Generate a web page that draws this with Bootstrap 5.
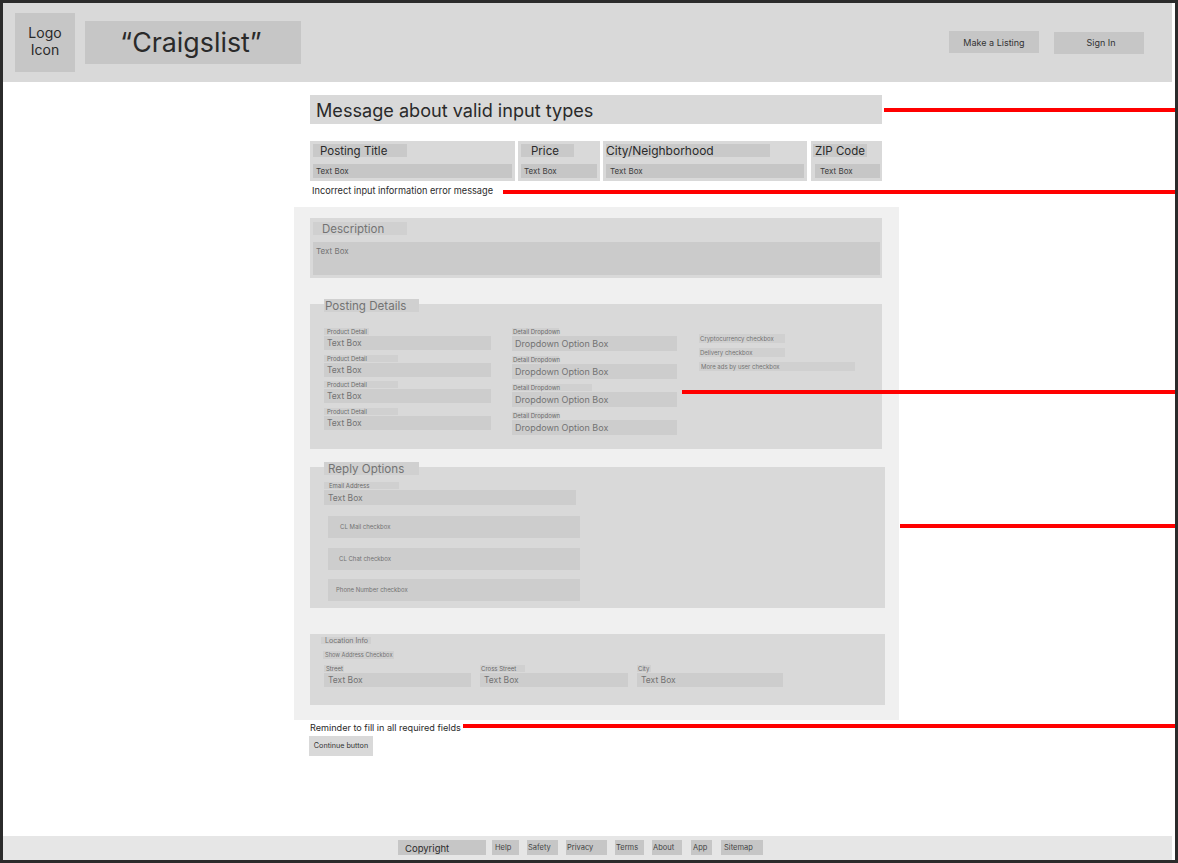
<!DOCTYPE html>
<html lang="en">
<head>
    <meta charset="UTF-8">
    <meta name="viewport" content="width=device-width, initial-scale=1">
    <title>Craigslist listing wireframe</title>

    <!-- Bootstrap CSS -->
    <link href="https://cdn.jsdelivr.net/npm/bootstrap@5.3.0/dist/css/bootstrap.min.css" rel="stylesheet">

    <style>
        body { background: #2b2b2b; font-family: Inter, "Liberation Sans", sans-serif; color: #2a2a2a; }
        .frame { margin: 3px 3px 3px 3px; height: 857px; background: #fff; }

        /* header */
        .top-bar { width: 1169px; height: 79px; background: #d9d9d9; padding-left: 12px; padding-right: 28px; }
        .logo-box { width: 60px; height: 59px; padding-bottom: 2px; background: #c6c6c6; font-size: 14px; line-height: 17px; margin-top: -1px; }
        .brand-box { width: 216px; height: 43px; margin-left: 10px; padding-right: 4px; background: #c6c6c6; font-size: 26.8px; }
        .top-btn { width: 90px; height: 22px; padding: 1px 0 0; border: 0; border-radius: 0; background: #c6c6c6; font-size: 9px; color: #333; }
        .top-btn + .top-btn { margin-left: 15px; margin-top: 1px; padding: 0 0 0 4px; }

        /* main column */
        .main-col { margin-left: 307px; width: 572px; }
        .valid-msg { height: 29px; margin-top: 13px; padding-left: 6px; padding-top: 2px; background: #d9d9d9; font-size: 18.1px; }
        .field-row { margin-top: 17px; }
        .field { height: 40px; padding: 3px; background: #d9d9d9; }
        .f-title { width: 205px; }
        .f-price { width: 82px; margin-left: 3px; }
        .f-city { width: 204px; margin-left: 3px; }
        .f-zip { width: 71px; margin-left: 4px; padding-left: 3px; padding-right: 2px; }
        .field-label { height: 13px; background: #c9c9c9; font-size: 11.5px; line-height: 15px; }
        .l-title { width: 94px; padding-left: 7px; }
        .l-price { width: 53px; padding-left: 10px; }
        .l-city { width: 164px; font-size: 12px; line-height: 13px; }
        .l-zip { width: 54px; margin-left: -1px; padding-left: 2px; }
        .field-text { height: 14px; margin-top: 7px; padding-left: 3px; background: #c6c6c6; font-size: 8px; line-height: 14px; color: #3c3c3c; }
        .f-city .field-text { padding-left: 4px; line-height: 15px; }
        .f-zip .field-text { margin-left: 1px; padding-left: 5px; line-height: 15px; }
        .error-msg { height: 26px; padding-left: 2px; font-size: 9.2px; line-height: 20px; }

        /* grey form area */
        .form-area { width: 605px; height: 513px; margin-left: -16px; padding: 11px 0 0 16px; background: #f0f0f0; color: #737373; }
        .desc-panel { width: 572px; height: 60px; padding: 4px 2px 3px 3px; background: #d9d9d9; }
        .desc-label { width: 94px; height: 13px; padding-left: 9px; background: #d0d0d0; font-size: 11.5px; line-height: 15px; }
        .desc-text { height: 33px; margin-top: 7px; padding: 3px; background: #cbcbcb; font-size: 8px; line-height: 12px; }

        .inner-panel { background: #d9d9d9; }
        .details-panel { width: 572px; height: 145px; margin-top: 26px; }
        .reply-panel { width: 575px; height: 141px; margin-top: 18px; }
        .location-panel { width: 575px; height: 71px; margin-top: 26px; padding: 3px 0 0 11px; }
        .panel-head { display: block; width: 95px; height: 13px; margin-left: 14px; background: #d0d0d0; font-size: 11.6px; line-height: 15px; position: relative; top: -5px; }
        .details-panel .panel-head { padding-left: 1px; }
        .reply-panel .panel-head { padding-left: 4px; }

        .details-cols { margin: 11px 0 0 14px; }
        .col-a { width: 167px; }
        .col-b { width: 165px; margin-left: 21px; }
        .col-c { margin-left: 22px; padding-top: 6px; }
        .tiny-label { height: 7px; margin-bottom: 1px; padding-left: 3px; background: #d0d0d0; font-size: 6px; line-height: 7px; color: #6a6a6a; white-space: nowrap; }
        .w-45 { width: 45px; }
        .w-47 { width: 47px; padding-left: 1px; }
        .w-74 { width: 74px; }
        .w-80 { width: 80px; padding-left: 1px; }
        .t-box { height: 14px; margin-bottom: 4.67px; padding-left: 3px; background: #cdcdcd; font-size: 8.5px; line-height: 14px; }
        .d-box { height: 15px; margin-bottom: 5px; padding-left: 3px; background: #cdcdcd; font-size: 9px; line-height: 15px; }
        .chk-item { width: 86px; height: 9px; margin-bottom: 5px; padding-left: 1px; background: #d0d0d0; font-size: 6px; line-height: 9px; white-space: nowrap; }
        .chk-item.chk-wide { width: 156px; padding-left: 2px; }

        .reply-body { margin: 2px 0 0 14px; }
        .email-label { width: 75px; padding-left: 5px; }
        .email-box { width: 252px; height: 15px; margin-bottom: 0; padding-left: 4px; line-height: 16px; }
        .reply-chk { width: 252px; height: 22px; margin-left: 4px; padding-bottom: 2px; background: #cdcdcd; font-size: 6px; }
        .chk-mail { margin-top: 11px; padding-left: 12px; }
        .chk-chat { margin-top: 10px; padding-left: 11px; }
        .chk-phone { margin-top: 9px; padding-left: 8px; }

        .loc-title { width: 50px; height: 7px; padding-left: 4px; background: #d0d0d0; font-size: 7px; line-height: 7px; }
        .loc-show { width: 71px; height: 8px; margin: 7px 0 0 2px; padding-left: 2px; background: #d0d0d0; font-size: 5.7px; line-height: 8px; white-space: nowrap; }
        .loc-cols { margin: 6px 0 0 3px; }
        .loc-a { width: 147px; }
        .loc-b { width: 148px; margin-left: 9px; }
        .loc-c { width: 146px; margin-left: 9px; }
        .loc-l1 { width: 20px; padding-left: 2px; }
        .loc-l2 { width: 45px; padding-left: 1px; }
        .loc-l3 { width: 14px; padding-left: 1px; }
        .loc-box { margin-bottom: 0; padding-left: 4px; }

        .reminder { height: 16px; font-size: 9.1px; line-height: 15px; color: #2a2a2a; }
        .continue-btn { width: 64px; height: 20px; margin-left: -1px; padding: 1px 0 0; border: 0; border-radius: 0; background: #d9d9d9; font-size: 7.2px; color: #333; }

        /* footer */
        .bottom-bar { width: 1169px; height: 24px; margin-top: auto; padding: 4px 0 0 395px; background: #e6e6e6; }
        .foot-item { height: 15px; margin-right: 8px; padding-left: 3px; background: #c6c6c6; font-size: 7.5px; line-height: 16px; color: #444; }
        .foot-copy { width: 88px; margin-right: 6px; padding-left: 7px; font-size: 9.5px; line-height: 18px; color: #2a2a2a; }
        .foot-help { width: 27px; }
        .foot-safety { width: 31px; padding-left: 1px; }
        .foot-privacy { width: 41px; padding-left: 1px; }
        .foot-terms { width: 29px; padding-left: 1px; }
        .foot-about { width: 30px; padding-left: 1px; margin-right: 9px; }
        .foot-app { width: 21px; padding-left: 2px; margin-right: 9px; }
        .foot-map { width: 42px; padding-left: 3px; margin-right: 0; }

        /* red annotation lines over the page */
        .note-line { position: absolute; right: 0; height: 4px; background: #f00; }
        .line-1 { left: 881px; top: 105px; }
        .line-2 { left: 500px; top: 187px; }
        .line-3 { left: 679px; top: 387px; }
        .line-4 { left: 897px; top: 521px; }
        .line-5 { left: 460px; top: 721px; }
    </style>
</head>
<body>
    <div class="frame d-flex flex-column position-relative">
        <header class="top-bar d-flex align-items-center">
            <div class="logo-box d-flex align-items-center justify-content-center text-center">Logo<br>Icon</div>
            <div class="brand-box d-flex align-items-center justify-content-center">“Craigslist”</div>
            <div class="ms-auto d-flex align-items-start">
                <button type="button" class="btn top-btn">Make a Listing</button>
                <button type="button" class="btn top-btn">Sign In</button>
            </div>
        </header>

        <form class="main-col">
            <div class="valid-msg d-flex align-items-center">Message about valid input types</div>

            <div class="field-row d-flex">
                <div class="field f-title">
                    <div class="field-label l-title">Posting Title</div>
                    <div class="field-text">Text Box</div>
                </div>
                <div class="field f-price">
                    <div class="field-label l-price">Price</div>
                    <div class="field-text">Text Box</div>
                </div>
                <div class="field f-city">
                    <div class="field-label l-city">City/Neighborhood</div>
                    <div class="field-text">Text Box</div>
                </div>
                <div class="field f-zip">
                    <div class="field-label l-zip">ZIP Code</div>
                    <div class="field-text">Text Box</div>
                </div>
            </div>
            <div class="error-msg">Incorrect input information error message</div>

            <div class="form-area">
                <section class="desc-panel">
                    <div class="desc-label">Description</div>
                    <div class="desc-text">Text Box</div>
                </section>

                <section class="inner-panel details-panel">
                    <span class="panel-head">Posting Details</span>
                    <div class="details-cols d-flex">
                        <div class="col-a">
                            <div class="tiny-label w-45">Product Detail</div>
                            <div class="t-box">Text Box</div>
                            <div class="tiny-label w-74">Product Detail</div>
                            <div class="t-box">Text Box</div>
                            <div class="tiny-label w-74">Product Detail</div>
                            <div class="t-box">Text Box</div>
                            <div class="tiny-label w-74">Product Detail</div>
                            <div class="t-box">Text Box</div>
                        </div>
                        <div class="col-b">
                            <div class="tiny-label w-47">Detail Dropdown</div>
                            <div class="d-box">Dropdown Option Box</div>
                            <div class="tiny-label w-47">Detail Dropdown</div>
                            <div class="d-box">Dropdown Option Box</div>
                            <div class="tiny-label w-80">Detail Dropdown</div>
                            <div class="d-box">Dropdown Option Box</div>
                            <div class="tiny-label w-47">Detail Dropdown</div>
                            <div class="d-box">Dropdown Option Box</div>
                        </div>
                        <div class="col-c">
                            <div class="chk-item">Cryptocurrency checkbox</div>
                            <div class="chk-item">Delivery checkbox</div>
                            <div class="chk-item chk-wide">More ads by user checkbox</div>
                        </div>
                    </div>
                </section>

                <section class="inner-panel reply-panel">
                    <span class="panel-head">Reply Options</span>
                    <div class="reply-body">
                        <div class="tiny-label email-label">Email Address</div>
                        <div class="t-box email-box">Text Box</div>
                        <div class="reply-chk chk-mail d-flex align-items-center">CL Mail checkbox</div>
                        <div class="reply-chk chk-chat d-flex align-items-center">CL Chat checkbox</div>
                        <div class="reply-chk chk-phone d-flex align-items-center">Phone Number checkbox</div>
                    </div>
                </section>

                <section class="inner-panel location-panel">
                    <div class="loc-title">Location Info</div>
                    <div class="loc-show">Show Address Checkbox</div>
                    <div class="loc-cols d-flex">
                        <div class="loc-a">
                            <div class="tiny-label loc-l1">Street</div>
                            <div class="t-box loc-box">Text Box</div>
                        </div>
                        <div class="loc-b">
                            <div class="tiny-label loc-l2">Cross Street</div>
                            <div class="t-box loc-box">Text Box</div>
                        </div>
                        <div class="loc-c">
                            <div class="tiny-label loc-l3">City</div>
                            <div class="t-box loc-box">Text Box</div>
                        </div>
                    </div>
                </section>
            </div>

            <div class="reminder">Reminder to fill in all required fields</div>
            <button type="button" class="btn continue-btn d-block">Continue button</button>
        </form>

        <footer class="bottom-bar d-flex">
            <div class="foot-item foot-copy">Copyright</div>
            <div class="foot-item foot-help">Help</div>
            <div class="foot-item foot-safety">Safety</div>
            <div class="foot-item foot-privacy">Privacy</div>
            <div class="foot-item foot-terms">Terms</div>
            <div class="foot-item foot-about">About</div>
            <div class="foot-item foot-app">App</div>
            <div class="foot-item foot-map">Sitemap</div>
        </footer>

        <div class="note-line line-1"></div>
        <div class="note-line line-2"></div>
        <div class="note-line line-3"></div>
        <div class="note-line line-4"></div>
        <div class="note-line line-5"></div>
    </div>

    <script src="https://cdn.jsdelivr.net/npm/bootstrap@5.3.0/dist/js/bootstrap.bundle.min.js"></script>
</body>
</html>
